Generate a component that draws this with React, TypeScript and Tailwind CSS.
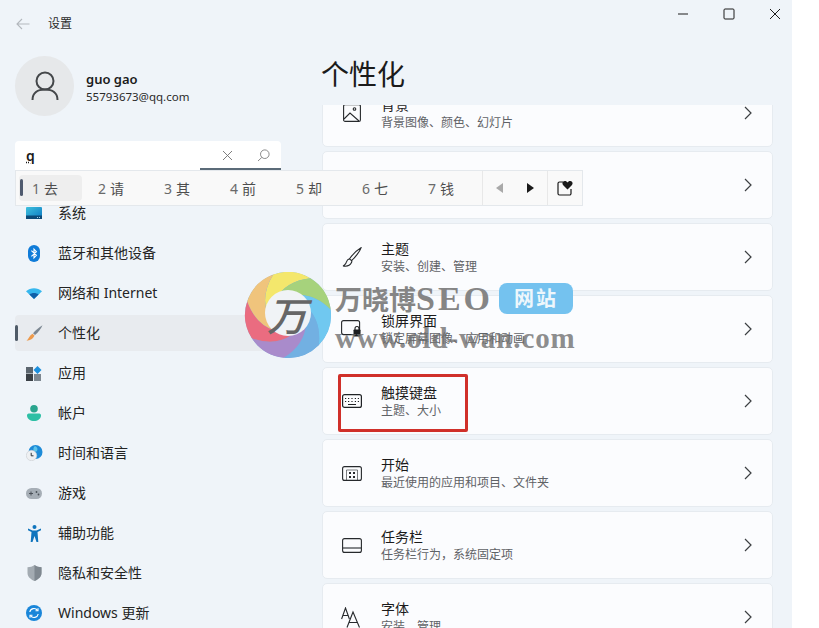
import React from "react";

const FONT = "[font-family:'Noto_Sans','Noto_Sans_CJK_SC',sans-serif]";

const Chevron = () => (
  <svg width="8" height="14" viewBox="0 0 8 14" fill="none" stroke="#3c3f42" strokeWidth="1.2">
    <path d="M1 1l6 6-6 6" />
  </svg>
);

/* ---------- sidebar icons ---------- */
const SystemIcon = () => (
  <svg width="16" height="12" viewBox="0 0 16 12">
    <defs>
      <linearGradient id="sysg" x1="0" y1="0" x2="1" y2="1">
        <stop offset="0" stopColor="#3fc1dd" />
        <stop offset="1" stopColor="#0b78c2" />
      </linearGradient>
    </defs>
    <rect width="16" height="12" rx="1" fill="url(#sysg)" />
    <rect y="8.5" width="16" height="3.5" fill="#0c4a78" />
    <rect x="11" y="10" width="1" height="1" fill="#9fd2ea" />
    <rect x="13" y="10" width="1" height="1" fill="#9fd2ea" />
  </svg>
);
const BluetoothIcon = () => (
  <svg width="12" height="17" viewBox="0 0 12 17">
    <rect width="12" height="17" rx="6" fill="#0f7bd8" />
    <path d="M3.4 5.6l5 4.7L6 12.8V4.2l2.4 2.5-5 4.7" fill="none" stroke="#fff" strokeWidth="1.1" />
  </svg>
);
const WifiIcon = () => (
  <svg width="16" height="11" viewBox="0 0 16 11">
    <path d="M0 3.2C4.500-.9 11.500-.9 16 3.200L8 11z" fill="#36b7ee" />
    <path d="M3.400 6.400C6 4.400 10 4.400 12.600 6.400L8 11z" fill="#0f5fa8" />
  </svg>
);
const BrushIcon = () => (
  <svg width="17" height="16" viewBox="0 0 17 16">
    <path d="M16.500.300C13 2.500 9.500 5.300 7 8.200l2 1.800C12 7.500 15 4 16.500.300z" fill="#7c8792" />
    <path d="M6.500 8.700l2 1.800C7.500 13.500 4 15.500.500 15.800 2.500 14 3.500 10.500 6.500 8.700z" fill="#ed9a4c" />
  </svg>
);
const AppsIcon = () => (
  <svg width="16" height="15" viewBox="0 0 16 15">
    <rect x="0" y="1" width="7" height="6.500" fill="#5c666f" />
    <rect x="0" y="8" width="7" height="7" fill="#3a4046" />
    <rect x="8" y="8" width="7" height="7" fill="#7d8790" />
    <path d="M11.500 0L15.500 4 11.500 8 7.500 4z" fill="#1c8fdd" />
  </svg>
);
const AccountIcon = () => (
  <svg width="14" height="16" viewBox="0 0 14 16">
    <circle cx="7" cy="3.800" r="3.800" fill="#2aa58f" />
    <path d="M0 10.500C0 9 1 8.500 2.500 8.500h9c1.500 0 2.500.5 2.500 2C14 14 10.500 16 7 16S0 14 0 10.500z" fill="#2dbfa5" />
  </svg>
);
const TimeIcon = () => (
  <svg width="17" height="16" viewBox="0 0 17 16">
    <circle cx="9.500" cy="7" r="7" fill="#1d8bd8" />
    <path d="M9 1c2.500 1 3 3 2 5-1 1-3 1-3.500-1C7 3.500 8 2 9 1z" fill="#5cc3ea" />
    <circle cx="5.500" cy="10.500" r="5.200" fill="#eef0f2" stroke="#c9cdd1" strokeWidth=".6" />
    <path d="M5.200 7.800v3h2.300" stroke="#2e3338" strokeWidth="1" fill="none" />
  </svg>
);
const GameIcon = () => (
  <svg width="16" height="11" viewBox="0 0 16 11">
    <rect width="16" height="11" rx="5.500" fill="#a6aeb6" />
    <path d="M3 5.500h4M5 3.500v4" stroke="#4a5158" strokeWidth="1" />
    <circle cx="10.500" cy="4" r=".9" fill="#4a5158" />
    <circle cx="12.500" cy="6.500" r=".9" fill="#4a5158" />
  </svg>
);
const AccessIcon = () => (
  <svg width="13" height="17" viewBox="0 0 13 17">
    <circle cx="6.500" cy="2" r="2" fill="#0f74bd" />
    <path d="M0 3.500l4.500 2h4l4.500-2 .3 1.600-3.800 2 .8 9.900H8.500L6.500 11l-2 6H2.700l.8-9.900-3.800-2z" fill="#0f74bd" />
  </svg>
);
const ShieldIcon = () => (
  <svg width="15" height="16" viewBox="0 0 15 16">
    <path d="M7.500 0c2 1.500 4.500 2.200 7 2.200V8c0 4-3.500 6.500-7 8-3.500-1.500-7-4-7-8V2.200C3 2.200 5.500 1.500 7.500 0z" fill="#a3abb2" />
    <path d="M7.500 0c2 1.500 4.500 2.200 7 2.200V8c0 4-3.500 6.500-7 8z" fill="#7f8890" />
  </svg>
);
const UpdateIcon = () => (
  <svg width="16" height="16" viewBox="0 0 16 16">
    <circle cx="8" cy="8" r="8" fill="#1a86d9" />
    <path d="M3.800 7A4.300 4.300 0 0 1 11.500 5.300M12.200 9a4.300 4.300 0 0 1-7.700 1.700" fill="none" stroke="#fff" strokeWidth="1.200" />
    <path d="M12 3.300v2.500H9.500M4 12.700v-2.500h2.500" fill="none" stroke="#fff" strokeWidth="1.100" />
  </svg>
);

const navItems = [
  { label: "系统", icon: <SystemIcon /> },
  { label: "蓝牙和其他设备", icon: <BluetoothIcon /> },
  { label: "网络和 Internet", icon: <WifiIcon /> },
  { label: "个性化", icon: <BrushIcon />, active: true },
  { label: "应用", icon: <AppsIcon /> },
  { label: "帐户", icon: <AccountIcon /> },
  { label: "时间和语言", icon: <TimeIcon /> },
  { label: "游戏", icon: <GameIcon /> },
  { label: "辅助功能", icon: <AccessIcon /> },
  { label: "隐私和安全性", icon: <ShieldIcon /> },
  { label: "Windows 更新", icon: <UpdateIcon /> },
];

/* ---------- card icons ---------- */
const line = { fill: "none", stroke: "#26292c", strokeWidth: 1.1 };
const PictureIcon = () => (
  <svg width="18" height="18" viewBox="0 0 18 18" {...line}>
    <rect x=".6" y=".6" width="16.800" height="16.800" rx="1.500" />
    <circle cx="11.500" cy="5" r="1.300" />
    <path d="M1 15l6-6 9 8" />
  </svg>
);
const ThemeIcon = () => (
  <svg width="20" height="20" viewBox="0 0 20 20" {...line}>
    <path d="M19 .8c-3 1.800-9 7.500-11.500 11l2 1.800C13 11 18 4 19 .8z" />
    <path d="M7.500 11.800c-3 .8-3 3.500-3.800 4.800-.5 1-1.500 2-2.700 2.400 3 .5 6.800.2 8.500-3.400.4-1 .4-2 0-2.700" />
  </svg>
);
const LockIcon = () => (
  <svg width="21" height="18" viewBox="0 0 21 18">
    <rect x=".6" y=".6" width="18" height="14" rx="2" {...line} />
    <rect x="12.500" y="9.500" width="7" height="7" rx=".8" fill="#1c1e20" />
    <path d="M14 10V8.500a2 2 0 0 1 4 0V10" fill="none" stroke="#1c1e20" strokeWidth="1.100" />
  </svg>
);
const KeyboardIcon = () => (
  <svg width="20" height="14" viewBox="0 0 20 14" fill="none" stroke="#1f2225" strokeWidth="1.200">
    <rect x=".6" y=".6" width="18.800" height="12.800" rx="2" />
    <path d="M3 4.500h1.200M6 4.500h1.200M9.400 4.500h1.200M12.800 4.500H14M15.800 4.500H17M3 7.500h1.200M6 7.500h1.200M9.400 7.500h1.200M12.800 7.500H14M15.800 7.500H17M6 10.500h8" />
  </svg>
);
const StartIcon = () => (
  <svg width="20" height="15" viewBox="0 0 20 15" fill="none" stroke="#26292c">
    <rect x=".6" y=".6" width="18.800" height="13.800" rx="2" strokeWidth="1.100" />
    <path d="M4.500 14V4h11v10" strokeWidth=".6" />
    <path d="M7 6h2v2H7zM11 6h2v2h-2zM7 10h2v2H7zM11 10h2v2h-2z" fill="#26292c" stroke="none" />
  </svg>
);
const TaskbarIcon = () => (
  <svg width="20" height="15" viewBox="0 0 20 15" {...line}>
    <rect x=".6" y=".6" width="18.800" height="13.800" rx="2" />
    <path d="M1 10h18" />
  </svg>
);
const FontIcon = () => (
  <svg width="21" height="21" viewBox="0 0 21 21" {...line}>
    <path d="M.6 12L4.500 1l3.900 11M2 8.500h5" />
    <path d="M6 20.500L12 5l6.500 15.500M8 15.500h8.500" />
  </svg>
);

const cards = [
  { title: "背景", sub: "背景图像、颜色、幻灯片", icon: <PictureIcon /> },
  {},
  { title: "主题", sub: "安装、创建、管理", icon: <ThemeIcon /> },
  { title: "锁屏界面", sub: "锁定屏幕图像、应用和动画", icon: <LockIcon /> },
  { title: "触摸键盘", sub: "主题、大小", icon: <KeyboardIcon />, marked: true },
  { title: "开始", sub: "最近使用的应用和项目、文件夹", icon: <StartIcon /> },
  { title: "任务栏", sub: "任务栏行为\uFF0C系统固定项", icon: <TaskbarIcon /> },
  { title: "字体", sub: "安装、管理", icon: <FontIcon /> },
] as { title?: string; sub?: string; icon?: React.ReactNode; marked?: boolean }[];

const candidates = ["去", "请", "其", "前", "却", "七", "钱"];

/* swirl ring of the watermark logo */
const swirl = ["#f4e76c", "#a6d27c", "#70c8f0", "#72b0e2", "#a98bcb", "#ea6c80", "#f0c47c"];
const polar = (r: number, deg: number, cx = 44, cy = 43) => {
  const a = (deg * Math.PI) / 180;
  return `${(cx + r * Math.cos(a)).toFixed(2)} ${(cy + r * Math.sin(a)).toFixed(2)}`;
};
const petal = (i: number) => {
  const from = -110 + (i * 360) / 7;
  const to = from + 360 / 7;
  return `M${polar(43, from)} A43 43 0 0 1 ${polar(43, to)} Q${polar(34, to - 35)} ${polar(20, to - 70)} L${polar(20, from - 70)} Q${polar(34, from - 35)} ${polar(43, from)}Z`;
};

const Watermark = () => (
  <div className="absolute left-[244px] top-[272px] h-[90px] w-[335px]">
    <svg width="88" height="88" viewBox="0 0 88 88" className="absolute left-0 top-0">
      <circle cx="44" cy="43" r="43" fill="#72b0e2" />
      {swirl.map((c, i) => (
        <path key={c} d={petal(i)} fill={c} />
      ))}
      <circle cx="44" cy="41" r="23" fill="#f0f3f6" />
    </svg>
    <span className="absolute left-[23px] top-[17px] text-[40px] font-medium leading-[50px] text-[#666666] italic [font-family:'Noto_Sans_CJK_SC',sans-serif]">
      万
    </span>
    <span className="absolute left-[91px] top-[8px] flex items-baseline whitespace-nowrap text-[27px] font-bold leading-[38px] text-[#858585] [font-family:'Liberation_Serif','Noto_Sans_CJK_SC',serif]">
      万晓博<span className="text-[34px] tracking-[3px]">SEO</span>
    </span>
    <span className="absolute left-[255px] top-[11px] flex h-[31px] w-[74px] items-center justify-center rounded-[8px] bg-[#74c2ef] text-[20px] font-bold tracking-[2px] text-[#eef7fc]">
      网站
    </span>
    <span className="absolute left-[91px] top-[48px] whitespace-nowrap text-[29px] font-bold leading-[36px] tracking-[0.9px] text-[#6f6f6f]/80 [font-family:'Liberation_Serif',serif]">
      www.old-wan.com
    </span>
  </div>
);

const CandidateBar = () => (
  <div className="absolute left-[15px] top-[170px] flex h-[36px] w-[568px] items-center border border-[#e4e8ec] bg-[#f9f9f9] pl-[3px]">
    {candidates.map((c, i) => (
      <div
        key={c}
        className={`relative flex h-[26px] items-center gap-[4px] rounded-[4px] pl-[13px] text-[14px] text-[#4d4d4d] ${i === 0 ? "mr-[3px] w-[63px] bg-[#eeeeee]" : "w-[66px]"}`}
      >
        {i === 0 && <span className="absolute left-[1px] top-[4px] h-[17px] w-[3px] rounded-full bg-[#4f5a6e]" />}
        <span className="text-[#6a6a6a]">{i + 1}</span>
        <span>{c}</span>
      </div>
    ))}
    <div className="ml-[1px] flex h-full w-[66px] items-center justify-center gap-[22px] border-x border-[#e8e8e8]">
      <svg width="8" height="10" viewBox="0 0 8 10"><path d="M7 0v10L0 5z" fill="#a9a9a9" /></svg>
      <svg width="8" height="10" viewBox="0 0 8 10"><path d="M1 0v10l7-5z" fill="#1a1a1a" /></svg>
    </div>
    <div className="flex h-full w-[34px] items-center justify-center">
      <svg width="16" height="16" viewBox="0 0 16 16">
        <path d="M6 2H2.500A1.500 1.500 0 0 0 1 3.500v10A1.500 1.500 0 0 0 2.500 15h10a1.500 1.500 0 0 0 1.500-1.500V9" fill="none" stroke="#1a1a1a" strokeWidth="1.200" />
        <path d="M10.500 9.500L6 5C4.800 3.500 5.500 1 7.800 1c1.300 0 2.200.7 2.700 1.500C11 1.700 12 1 13.200 1c2.300 0 3 2.500 1.800 4z" fill="#1a1a1a" />
      </svg>
    </div>
  </div>
);

export default function App() {
  return (
    <div className={`relative flex h-[628px] w-[819px] overflow-hidden bg-white ${FONT}`}>
      <div className="flex h-full w-[792px] bg-[#eff4f9]">
        {/* Sidebar */}
        <aside className="w-[322px] shrink-0">
          <div className="flex h-[47px] items-center pl-[16px]">
            <svg width="14" height="12" viewBox="0 0 14 12" fill="none" stroke="#b3b8bd" strokeWidth="1.100">
              <path d="M13.500 6H1M6 1L1 6l5 5" />
            </svg>
            <span className="ml-[18px] text-[12px] text-[#2a2a2a]">设置</span>
          </div>

          <div className="ml-[15px] mt-[9px] flex h-[60px] items-center">
            <div className="flex h-[60px] w-[59px] items-center justify-center rounded-full bg-[#e6e8ea]">
              <svg width="28" height="30" viewBox="0 0 28 30" fill="none" stroke="#44474a" strokeWidth="2">
                <circle cx="14" cy="10" r="8.500" />
                <path d="M1.500 29c0-7 5-10.500 12.500-10.500S26.500 22 26.500 29" />
              </svg>
            </div>
            <div className="ml-[12px] pt-[2px]">
              <div className="text-[13px] font-semibold leading-[18px] text-[#1b1b1b]">guo gao</div>
              <div className="text-[11.500px] leading-[17px] text-[#2a2a2a]">55793673@qq.com</div>
            </div>
          </div>

          <div className="relative ml-[15px] mt-[25px] flex h-[30px] w-[266px] items-center rounded-t-[4px] border-b border-[#55606b] bg-white pl-[11px] pr-[11px]">
            <span className="text-[14px] font-semibold leading-none text-[#1a1a1a] underline decoration-dotted underline-offset-1">q</span>
            <svg className="ml-auto" width="11" height="11" viewBox="0 0 11 11" fill="none" stroke="#6f6f6f" strokeWidth=".9">
              <path d="M1 1l9 9M10 1l-9 9" />
            </svg>
            <svg className="ml-[24px]" width="13" height="13" viewBox="0 0 13 13" fill="none" stroke="#7d7d7d" strokeWidth=".9">
              <circle cx="7.800" cy="5.200" r="4.300" />
              <path d="M4.800 8.400L1 12" />
            </svg>
            <span className="absolute bottom-[-1px] right-0 h-[3px] w-[81px] bg-[#5b6b78]" />
          </div>

          <nav className="ml-[15px] mr-[12px] mt-[24px]">
            {navItems.map((item) => (
              <div
                key={item.label}
                className={`relative mb-[4px] flex h-[36px] items-center rounded-[4px] ${item.active ? "bg-[#e8ebef]" : ""}`}
              >
                {item.active && <span className="absolute left-0 top-[10px] h-[16px] w-[3px] rounded-full bg-[#4f5b68]" />}
                <div className="flex w-[38px] justify-center">{item.icon}</div>
                <span className="ml-[5px] pb-[2px] text-[14px] text-[#242424]">{item.label}</span>
              </div>
            ))}
          </nav>
        </aside>

        {/* Main */}
        <main className="flex h-full w-[451px] shrink-0 flex-col">
          <div className="h-[105px] shrink-0">
            <div className="-mr-[8px] flex h-[28px] items-center justify-end gap-[34px]">
              <svg width="12" height="12" viewBox="0 0 12 12" stroke="#1c1c1c" strokeWidth="1">
                <path d="M1 6h10" />
              </svg>
              <svg width="12" height="12" viewBox="0 0 12 12" fill="none" stroke="#1c1c1c" strokeWidth="1">
                <rect x="1" y="1" width="10" height="10" rx="1" />
              </svg>
              <svg width="12" height="12" viewBox="0 0 12 12" stroke="#1c1c1c" strokeWidth="1">
                <path d="M1 1l10 10M11 1L1 11" />
              </svg>
            </div>
            <h1 className="-ml-[1px] mt-[28px] text-[28px] leading-[36px] text-[#1b1b1b]">个性化</h1>
          </div>

          <div className="min-h-0 flex-1 overflow-hidden">
            <div className="-mt-[26px] flex flex-col gap-[4px]">
              {cards.map((card, i) => (
                <div
                  key={i}
                  className="relative flex h-[68px] shrink-0 items-center rounded-[5px] border border-[#e6ebf0] bg-[#fbfcfe] pr-[20px]"
                >
                  <div className="flex w-[57px] shrink-0 justify-center">{card.icon}</div>
                  {card.title && (
                    <div className="ml-[1px] pt-[2px]">
                      <div className="text-[14px] leading-[18px] text-[#1b1b1b]">{card.title}</div>
                      <div className="text-[12px] leading-[18px] text-[#5f6266]">{card.sub}</div>
                    </div>
                  )}
                  <div className="ml-auto">
                    <Chevron />
                  </div>
                  {card.marked && (
                    <span className="absolute left-[15px] top-[6px] h-[58px] w-[130px] rounded-[2px] border-[3px] border-[#d0302a]" />
                  )}
                </div>
              ))}
            </div>
          </div>
        </main>
      </div>

      <CandidateBar />
      <Watermark />
    </div>
  );
}
